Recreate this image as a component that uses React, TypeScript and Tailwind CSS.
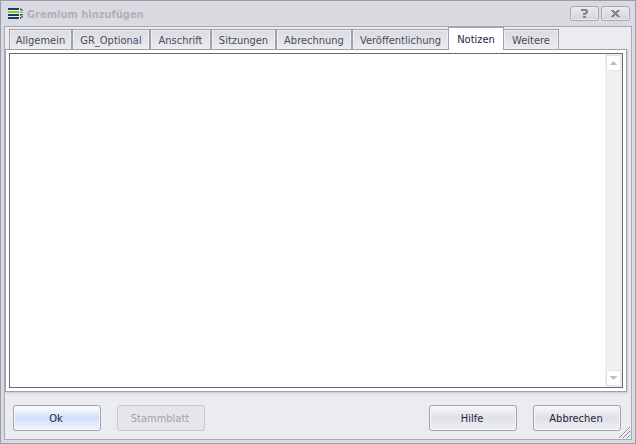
import { useState } from "react";

const tabs = [
  { label: "Allgemein", width: "w-[63px]" },
  { label: "GR_Optional", width: "w-[78px]" },
  { label: "Anschrift", width: "w-[61px]" },
  { label: "Sitzungen", width: "w-[65px]" },
  { label: "Abrechnung", width: "w-[76px]" },
  { label: "Veröffentlichung", width: "w-[97px]" },
  { label: "Notizen", width: "w-[56px]" },
  { label: "Weitere", width: "w-[56px]" },
];

function AppIcon() {
  return (
    <svg width="16" height="17" viewBox="0 0 16 17" aria-hidden="true">
      <path d="M0 3h12l3 3v5l-3 3H0z" fill="#eef0f3" />
      <path d="M0 3h11v2H0zM0 9h11v2H0zM0 12h11v2H0z" fill="#173f6b" />
      <path d="M0 6h11v2H0z" fill="#94c11f" />
      <path d="M12 3l3 2v1l-3-1z M12 9h3v1l-3 1z M12 12l3-1v1l-3 2z" fill="#315377" />
      <path d="M12 6l3 1v1h-3z" fill="#94c11f" />
    </svg>
  );
}

function CaptionButton({ label, children }: { label: string; children: React.ReactNode }) {
  return (
    <button
      type="button"
      aria-label={label}
      className="flex h-[15px] w-[29px] items-center justify-center rounded-[3px] border border-[#a5a6b0] bg-linear-to-b from-[#e9eaee] to-[#d3d4da] shadow-[inset_0_0_0_1px_#ececf0]"
    >
      {children}
    </button>
  );
}

function ScrollButton({ label, path }: { label: string; path: string }) {
  return (
    <button
      type="button"
      aria-label={label}
      className="flex h-4 w-full items-center justify-center border border-[#e3e3e3] bg-white"
    >
      <svg width="7" height="4" viewBox="0 0 7 4" aria-hidden="true">
        <path d={path} fill="#c1c1c1" />
      </svg>
    </button>
  );
}

const dialogButton =
  "h-[26px] w-[88px] rounded-[3px] border border-[#a3a5b1] bg-linear-to-b pt-0.5 pr-0.5 text-[#1e1e40] shadow-[inset_0_0_0_1px_#f5f6f9]";

export default function App() {
  const [active, setActive] = useState("Notizen");

  return (
    <div className="relative flex min-h-screen flex-col border border-[#9b9ba9] bg-[#dadbe0] px-[3px] pb-[3px] font-['DejaVu_Sans_Condensed','DejaVu_Sans',sans-serif] text-[11px] leading-[14px]">
      <header className="flex h-[25px] items-center pr-0.5 pl-1">
        <AppIcon />
        <h1 className="ml-[3px] flex-1 pt-0.5 font-bold text-[#afb0bb]">Gremium hinzufügen</h1>
        <div className="flex gap-0.5">
          <CaptionButton label="Hilfe zum Fenster">
            <svg width="7" height="9" viewBox="0 0 7 9" aria-hidden="true">
              <path d="M0 0h6v1h1v3H6v1H5v1H2V4h2V3h1V2H0zM2 7h3v2H2z" fill="#82838f" />
            </svg>
          </CaptionButton>
          <CaptionButton label="Schließen">
            <svg width="9" height="7" viewBox="0 0 9 7" aria-hidden="true">
              <path d="M0 0h3v1h1v1h1V1h1V0h3v1H8v1H7v1H6v1h1v1h1v1h1v1H6V6H5V5H4v1H3v1H0V6h1V5h1V4h1V3H2V2H1V1H0z" fill="#82838f" />
            </svg>
          </CaptionButton>
        </div>
      </header>

      <main className="flex flex-1 flex-col border border-[#a7a8b2] bg-[#ebecef]">
        <div role="tablist" className="flex h-[22px] items-end pl-1">
          {tabs.map((tab) => {
            const selected = tab.label === active;
            return (
              <button
                key={tab.label}
                type="button"
                role="tab"
                aria-selected={selected}
                aria-controls="tab-panel"
                onClick={() => setActive(tab.label)}
                className={`shrink-0 border border-b-0 border-[#a09fac] whitespace-nowrap ${tab.width} ${
                  selected
                    ? "z-10 -mx-px -mb-px h-[23px] bg-white pt-px text-[#1e1e40]"
                    : "h-5 bg-linear-to-b from-[#dadbe0] to-[#ebecef] pt-[3px] text-[#4a4a61] shadow-[inset_0_0_0_1px_#eeeff2]"
                }`}
              >
                {tab.label}
              </button>
            );
          })}
        </div>

        <section
          id="tab-panel"
          role="tabpanel"
          aria-label={active}
          className="mr-1 flex flex-1 flex-col border border-[#a09fac] bg-white p-[3px] shadow-[1px_1px_2px_#c5c6cd]"
        >
          <div className="flex flex-1 border border-[#696970] bg-white">
            <textarea aria-label="Notizen" className="flex-1 resize-none p-0.5 outline-none" />
            <div className="flex w-[17px] flex-col justify-between bg-[#f0f0f0] p-px">
              <ScrollButton label="Nach oben" path="M3 0h1v1h1v1h1v1h1v1H0V3h1V2h1V1h1z" />
              <ScrollButton label="Nach unten" path="M0 0h7v1H6v1H5v1H4v1H3V3H2V2H1V1H0z" />
            </div>
          </div>
        </section>

        <footer className="flex gap-4 px-2 pt-[13px] pb-2">
          <button type="button" className={`${dialogButton} from-white via-[#d3defb] to-[#f0f4ff]`}>
            Ok
          </button>
          <button
            type="button"
            disabled
            className="h-[26px] w-[88px] rounded-[3px] border border-[#c9cad0] bg-[#e5e6e9] pt-0.5 pr-0.5 text-[#a0a1ae]"
          >
            Stammblatt
          </button>
          <button type="button" className={`${dialogButton} ml-auto from-[#f7f8fa] via-[#dfe1e6] to-[#eff0f3]`}>
            Hilfe
          </button>
          <button type="button" className={`${dialogButton} mr-0.5 from-[#f7f8fa] via-[#dfe1e6] to-[#eff0f3]`}>
            Abbrechen
          </button>
        </footer>
      </main>

      <svg className="absolute right-[5px] bottom-[5px]" width="11" height="11" viewBox="0 0 11 11" aria-hidden="true">
        <path d="M1 11L11 1M5 11L11 5M9 11L11 9" stroke="#fff" />
        <path d="M0 11L11 0M4 11L11 4M8 11L11 8" stroke="#85868f" />
      </svg>
    </div>
  );
}
